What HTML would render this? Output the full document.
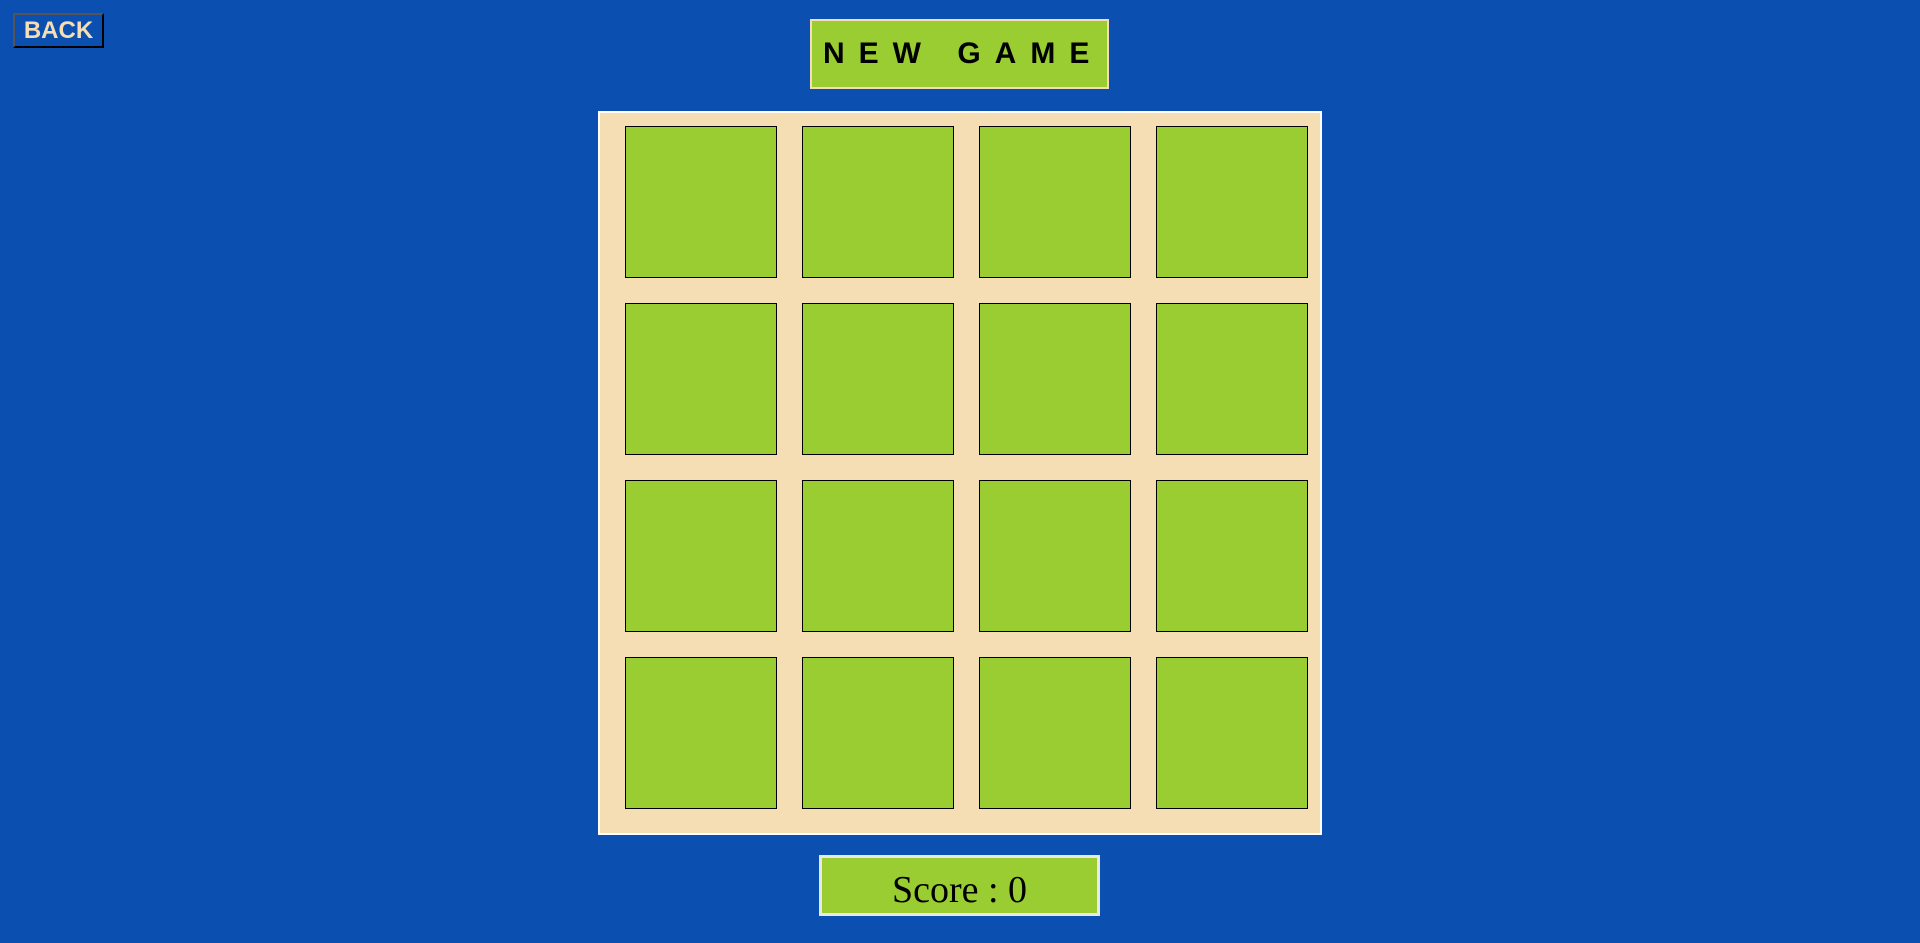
<!DOCTYPE html>
<html><head><meta charset="utf-8"><style>
html,body{margin:0;padding:0;width:1920px;height:943px;overflow:hidden;background:#0b50b0;font-family:"Liberation Sans",sans-serif}
.back{position:absolute;left:13px;top:13px;width:91px;height:35px;box-sizing:border-box;border:2px solid;border-color:#555 #000 #000 #555;color:#f5deb3;font-weight:bold;font-size:24px;line-height:31px;text-align:center}
.ng{position:absolute;left:810px;top:19px;width:299px;height:70px;box-sizing:border-box;border:2px solid #f5deb3;background:#9acd32;font-weight:bold;font-size:30px;letter-spacing:14px;line-height:66px;padding-left:11px;white-space:nowrap}
.board{position:absolute;left:598px;top:111px;width:724px;height:724px;box-sizing:border-box;border:2px solid #fff;background:#f5deb3}
.t{position:absolute;width:152px;height:152px;box-sizing:border-box;border:1px solid #000;background:#9acd32}
.score{position:absolute;left:819px;top:855px;width:281px;height:61px;box-sizing:border-box;border:3px solid #e8e8e8;background:#9acd32;font-family:"Liberation Serif",serif;font-size:38px;text-align:center;line-height:64px}
</style></head><body>
<div class="back">BACK</div>
<div class="ng">NEW GAME</div>
<div class="board">
<div class="t" style="left:25px;top:13px"></div><div class="t" style="left:202px;top:13px"></div><div class="t" style="left:379px;top:13px"></div><div class="t" style="left:556px;top:13px"></div>
<div class="t" style="left:25px;top:190px"></div><div class="t" style="left:202px;top:190px"></div><div class="t" style="left:379px;top:190px"></div><div class="t" style="left:556px;top:190px"></div>
<div class="t" style="left:25px;top:367px"></div><div class="t" style="left:202px;top:367px"></div><div class="t" style="left:379px;top:367px"></div><div class="t" style="left:556px;top:367px"></div>
<div class="t" style="left:25px;top:544px"></div><div class="t" style="left:202px;top:544px"></div><div class="t" style="left:379px;top:544px"></div><div class="t" style="left:556px;top:544px"></div>
</div>
<div class="score">Score : 0</div>
</body></html>
